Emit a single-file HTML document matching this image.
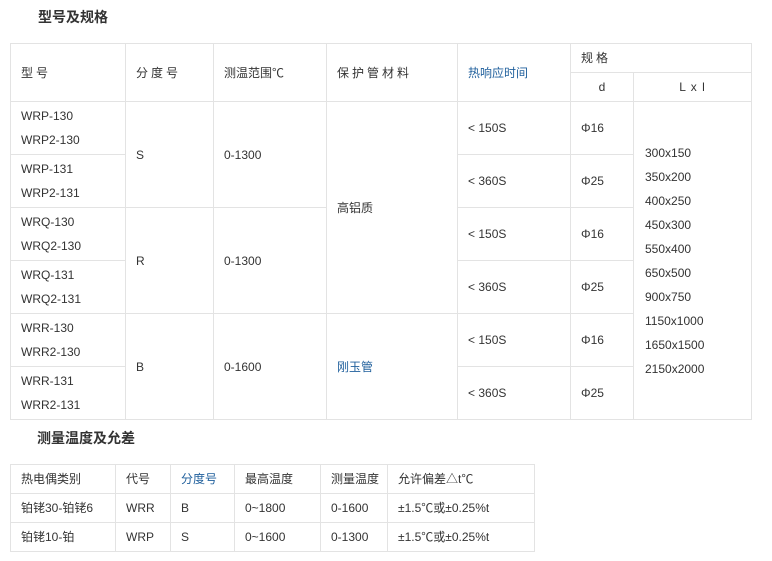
<!DOCTYPE html>
<html><head><meta charset="utf-8"><style>
body{margin:0;background:#fff;font-family:"Liberation Sans","Noto Sans CJK SC",sans-serif;font-size:12px;color:#333;}
.t{position:absolute;font-weight:bold;font-size:14px;color:#333;}
table{position:absolute;border-collapse:collapse;table-layout:fixed;}
td{border:1px solid #e3e3e3;padding:0 0 0 10px;vertical-align:middle;line-height:24px;white-space:nowrap;}
.b{color:#1f5f9c;}
.sp{letter-spacing:3px;}
</style></head><body>
<div class="t" style="left:38px;top:7px;">型号及规格</div>
<table style="left:10px;top:43px;width:742px;">
<colgroup><col style="width:115px"><col style="width:88px"><col style="width:113px"><col style="width:131px"><col style="width:113px"><col style="width:63px"><col style="width:118px"></colgroup>
<tr style="height:29px"><td rowspan="2" class="sp">型号</td><td rowspan="2" class="sp">分度号</td><td rowspan="2">测温范围℃</td><td rowspan="2" class="sp">保护管材料</td><td rowspan="2" class="b">热响应时间</td><td colspan="2" class="sp">规格</td></tr>
<tr style="height:29px"><td style="text-align:center;padding:0">d</td><td style="text-align:center;padding:0;letter-spacing:1px">L x l</td></tr>
<tr style="height:53px"><td>WRP-130<br>WRP2-130</td><td rowspan="2">S</td><td rowspan="2">0-1300</td><td rowspan="4">高铝质</td><td>&lt; 150S</td><td>Φ16</td><td rowspan="6" style="padding-left:11px">300x150<br>350x200<br>400x250<br>450x300<br>550x400<br>650x500<br>900x750<br>1150x1000<br>1650x1500<br>2150x2000</td></tr>
<tr style="height:53px"><td>WRP-131<br>WRP2-131</td><td>&lt; 360S</td><td>Φ25</td></tr>
<tr style="height:53px"><td>WRQ-130<br>WRQ2-130</td><td rowspan="2">R</td><td rowspan="2">0-1300</td><td>&lt; 150S</td><td>Φ16</td></tr>
<tr style="height:53px"><td>WRQ-131<br>WRQ2-131</td><td>&lt; 360S</td><td>Φ25</td></tr>
<tr style="height:53px"><td>WRR-130<br>WRR2-130</td><td rowspan="2">B</td><td rowspan="2">0-1600</td><td rowspan="2" class="b">刚玉管</td><td>&lt; 150S</td><td>Φ16</td></tr>
<tr style="height:53px"><td>WRR-131<br>WRR2-131</td><td>&lt; 360S</td><td>Φ25</td></tr>
</table>
<div class="t" style="left:37px;top:428px;">测量温度及允差</div>
<table style="left:10px;top:464px;width:524px;">
<colgroup><col style="width:105px"><col style="width:55px"><col style="width:64px"><col style="width:86px"><col style="width:67px"><col style="width:147px"></colgroup>
<tr style="height:29px"><td>热电偶类别</td><td>代号</td><td class="b">分度号</td><td>最高温度</td><td>测量温度</td><td>允许偏差△t℃</td></tr>
<tr style="height:29px"><td>铂铑30-铂铑6</td><td>WRR</td><td>B</td><td>0~1800</td><td>0-1600</td><td>±1.5℃或±0.25%t</td></tr>
<tr style="height:29px"><td>铂铑10-铂</td><td>WRP</td><td>S</td><td>0~1600</td><td>0-1300</td><td>±1.5℃或±0.25%t</td></tr>
</table>
</body></html>
